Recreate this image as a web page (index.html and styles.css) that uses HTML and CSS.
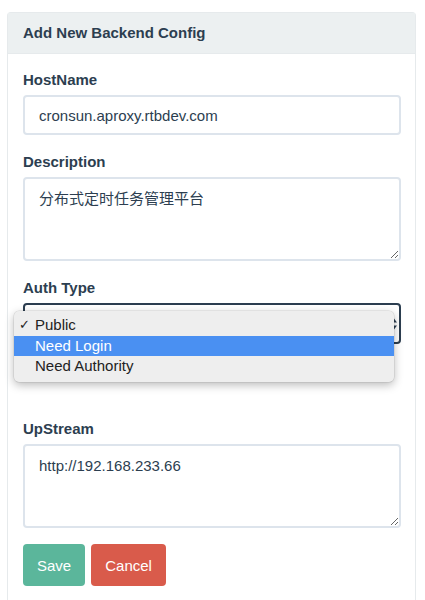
FILE: index.html
```html
<!DOCTYPE html>
<html lang="en">
<head>
<meta charset="utf-8">
<title>Add New Backend Config</title>
<link rel="stylesheet" href="styles.css">
</head>
<body>
<div class="page">
  <div class="panel">
    <div class="panel-heading">Add New Backend Config</div>
    <form class="panel-body">
      <div class="form-group">
        <label class="label">HostName</label>
        <input class="control" type="text" value="cronsun.aproxy.rtbdev.com">
      </div>
      <div class="form-group">
        <label class="label">Description</label>
        <textarea class="control area">分布式定时任务管理平台</textarea>
      </div>
      <div class="form-group select-group">
        <label class="label">Auth Type</label>
        <div class="select">
          <svg class="select-arrows" width="8" height="14" viewBox="0 0 8 14"><path d="M1 5.5 L4 1.5 L7 5.5 Z M1 8.5 L4 12.5 L7 8.5 Z" fill="#2c3e50"/></svg>
          <ul class="menu">
            <li class="menu-item"><span class="check">✓</span>Public</li>
            <li class="menu-item active">Need Login</li>
            <li class="menu-item">Need Authority</li>
          </ul>
        </div>
      </div>
      <div class="form-group">
        <label class="label">UpStream</label>
        <textarea class="control area">http://192.168.233.66</textarea>
      </div>
      <div class="actions">
        <button type="button" class="btn btn-save">Save</button>
        <button type="button" class="btn btn-cancel">Cancel</button>
      </div>
    </form>
  </div>
</div>
</body>
</html>
```

FILE: styles.css
```css
* { box-sizing: border-box; }
html, body { margin: 0; padding: 0; background: #fff; }
body {
  font-family: "Liberation Sans", Arial, "Noto Sans CJK SC", sans-serif;
  color: #2c3e50;
  font-size: 15px;
}
.page { padding: 12px 9px 0 7px; height: 600px; overflow: hidden; }
.panel {
  border: 1px solid #e6eaec;
  border-bottom: none;
  border-radius: 4px 4px 0 0;
  height: 620px;
}
.panel-heading {
  background: #ecf0f1;
  border-bottom: 1px solid #e6eaec;
  padding: 10px 15px;
  font-weight: bold;
  font-size: 15px;
  line-height: 20px;
  color: #2c3e50;
}
.panel-body { padding: 15px 14px 15px 15px; margin: 0; }
.form-group { margin-bottom: 16px; }
.select-group { margin-bottom: 74px; }
.label {
  display: block;
  font-weight: bold;
  font-size: 15px;
  line-height: 21px;
  margin-bottom: 5px;
  color: #2c3e50;
}
.control {
  display: block;
  width: 100%;
  height: 40px;
  border: 2px solid #dde4ec;
  border-radius: 4px;
  padding: 0 14px;
  font-family: "Liberation Sans", Arial, "Noto Sans CJK SC", sans-serif;
  font-size: 15px;
  color: #2c3e50;
  background: #fff;
  outline: none;
}
.area {
  height: 84px;
  padding: 9px 14px;
  line-height: 21px;
  resize: vertical;
}
.select {
  position: relative;
  height: 41px;
  border: 2px solid #2c3e50;
  border-radius: 4px;
  padding: 0 1px;
  display: flex;
  align-items: center;
  justify-content: flex-end;
}
.select-arrows { display: block; }
.menu {
  position: absolute;
  left: -11px;
  top: 6px;
  width: 380px;
  margin: 0;
  padding: 4px 0 5px;
  list-style: none;
  background: #eeeeee;
  border-radius: 5px;
  box-shadow: 0 3px 10px rgba(0,0,0,0.28), 0 0 0 0.5px rgba(0,0,0,0.12);
}
.menu-item {
  position: relative;
  height: 20.5px;
  line-height: 20.5px;
  padding-left: 21px;
  font-size: 15px;
  color: #222;
}
.menu-item.active { background: #4a90f2; color: #fff; }
.check {
  position: absolute;
  left: 5px;
  top: 0;
  font-family: "DejaVu Sans", sans-serif;
  font-size: 13px;
  font-weight: bold;
}
.actions { display: flex; gap: 6px; }
.btn {
  height: 42px;
  padding: 0 14px;
  border: none;
  border-radius: 4px;
  font-family: "Liberation Sans", Arial, sans-serif;
  font-size: 15px;
  color: #fff;
  cursor: pointer;
}
.btn-save { background: #5bb69b; }
.btn-cancel { background: #d95b4b; }
```
